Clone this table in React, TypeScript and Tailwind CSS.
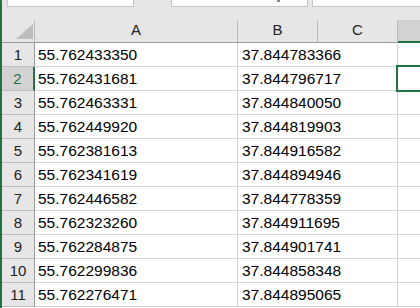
const rows = [
  ["55.762433350", "37.844783366"],
  ["55.762431681", "37.844796717"],
  ["55.762463331", "37.844840050"],
  ["55.762449920", "37.844819903"],
  ["55.762381613", "37.844916582"],
  ["55.762341619", "37.844894946"],
  ["55.762446582", "37.844778359"],
  ["55.762323260", "37.844911695"],
  ["55.762284875", "37.844901741"],
  ["55.762299836", "37.844858348"],
  ["55.762276471", "37.844895065"],
];

export default function App() {
  return (
    <div
      className="flex w-[420px] h-[308px] overflow-hidden bg-white"
      style={{ fontFamily: '"Liberation Sans", Arial, sans-serif' }}
    >
      <div className="w-[2px] shrink-0 bg-[#217346]" />
      <div className="flex flex-1 flex-col min-w-0">
        {/* formula bar strip */}
        <div className="flex h-[20px] shrink-0 items-start bg-[#e6e6e6]">
          <div className="ml-[5px] w-[127px] h-[7px] bg-white border-x border-b border-[#c6c6c6]" />
          <div className="relative ml-[37px] w-[137px] h-[7px] bg-white border-x border-b border-[#c6c6c6]">
            <div className="absolute left-[105px] top-0 w-[3px] h-[2px] bg-[#8a8a8a]" />
          </div>
          <div className="ml-[4px] flex-1 h-[7px] bg-white border-l border-b border-[#c6c6c6]" />
        </div>

        {/* column headers */}
        <div className="flex h-[23px] shrink-0 bg-[#e6e6e6] text-[15px] leading-[20px] text-[#222]">
          <div className="flex w-[33px] shrink-0 items-end justify-end pr-[1px] pb-[3px] border-r border-b border-r-[#bababa] border-b-[#9b9b9b]">
            <svg width="17" height="15" viewBox="0 0 17 15">
              <polygon points="17,0 17,15 0,15" fill="#bdbdbd" />
            </svg>
          </div>
          <div className="w-[203px] shrink-0 text-center border-r border-b border-r-[#bababa] border-b-[#9b9b9b]">A</div>
          <div className="w-[80px] shrink-0 text-center border-r border-b border-r-[#bababa] border-b-[#9b9b9b]">B</div>
          <div className="w-[80px] shrink-0 text-center border-r border-b border-r-[#bababa] border-b-[#9b9b9b]">C</div>
          <div className="flex-1 bg-[#d2d2d2] border-b-2 border-[#217346]" />
        </div>

        {/* rows */}
        {rows.map(([a, b], i) => {
          const sel = i === 1;
          return (
            <div key={i} className="flex h-[24px] shrink-0 text-[15.5px] leading-[23px]">
              <div
                className={
                  sel
                    ? "w-[33px] shrink-0 text-center text-[15px] text-[#217346] bg-[#d2d2d2] border-b border-b-[#bdbdbd] border-r-2 border-r-[#217346]"
                    : "w-[33px] shrink-0 text-center text-[15px] text-[#222] bg-[#e6e6e6] border-b border-b-[#bdbdbd] border-r border-r-[#9b9b9b]"
                }
              >
                {i + 1}
              </div>
              <div className="w-[203px] shrink-0 pl-[3px] text-black whitespace-nowrap border-r border-b border-[#d4d4d4]">
                {a}
              </div>
              <div className="w-[80px] shrink-0 pl-[4px] text-black whitespace-nowrap overflow-visible border-b border-[#d4d4d4]">
                {b}
              </div>
              <div className="w-[80px] shrink-0 border-r border-b border-[#d4d4d4]" />
              <div className="relative flex-1 border-b border-[#d4d4d4]">
                {sel && (
                  <div className="absolute -left-[2px] -top-[2px] -right-[10px] h-[27px] border-2 border-[#217346]" />
                )}
              </div>
            </div>
          );
        })}
      </div>
    </div>
  );
}
